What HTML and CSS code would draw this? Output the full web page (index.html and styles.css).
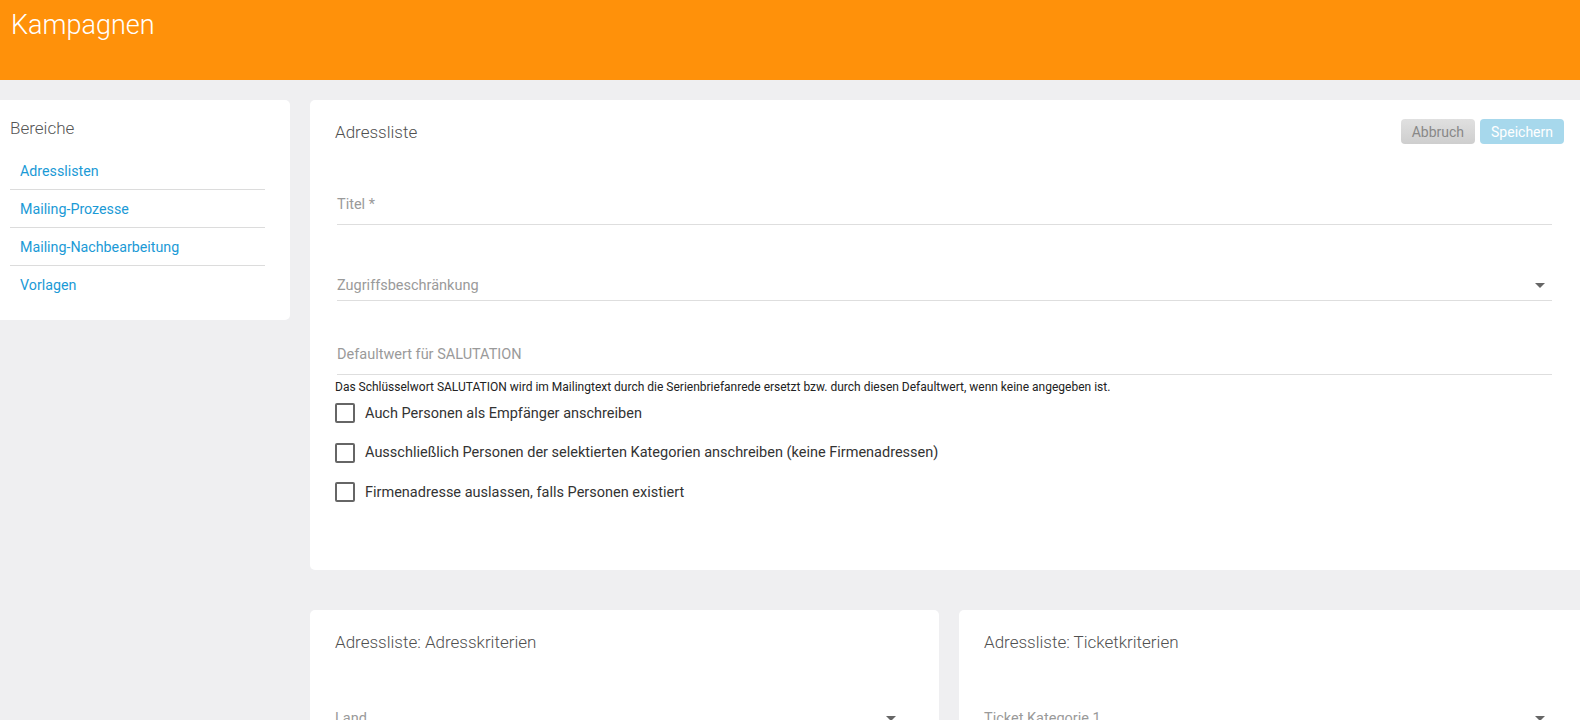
FILE: index.html
```html
<!DOCTYPE html>
<html>
<head>
    <meta charset="utf-8">
    <title>Kampagnen</title>
    <link rel="stylesheet" href="styles.css">
</head>
<body>
    <header class="topbar">
        <h1>Kampagnen</h1>
    </header>

    <div class="page">
        <aside class="sidebar">
            <h2>Bereiche</h2>
            <ul class="nav-list">
                <li><a href="#">Adresslisten</a></li>
                <li><a href="#">Mailing-Prozesse</a></li>
                <li><a href="#">Mailing-Nachbearbeitung</a></li>
                <li><a href="#">Vorlagen</a></li>
            </ul>
        </aside>

        <main class="content">
            <section class="card main-card">
                <div class="card-head">
                    <h3>Adressliste</h3>
                    <div class="actions">
                        <button class="btn btn-cancel">Abbruch</button>
                        <button class="btn btn-save">Speichern</button>
                    </div>
                </div>

                <div class="form">
                    <div class="field field-title">
                        <span class="label">Titel *</span>
                    </div>
                    <div class="field field-select field-access">
                        <span class="label">Zugriffsbeschränkung</span>
                        <span class="arrow"></span>
                    </div>
                    <div class="field field-default">
                        <span class="label">Defaultwert für SALUTATION</span>
                    </div>
                    <p class="hint">Das Schlüsselwort SALUTATION wird im Mailingtext durch die Serienbriefanrede ersetzt bzw. durch diesen Defaultwert, wenn keine angegeben ist.</p>
                </div>

                <div class="checks">
                    <label class="check"><span class="box"></span>Auch Personen als Empfänger anschreiben</label>
                    <label class="check"><span class="box"></span>Ausschließlich Personen der selektierten Kategorien anschreiben (keine Firmenadressen)</label>
                    <label class="check"><span class="box"></span>Firmenadresse auslassen, falls Personen existiert</label>
                </div>
            </section>

            <div class="criteria">
                <section class="card sub-card">
                    <h3>Adressliste: Adresskriterien</h3>
                    <div class="field field-select sub-field">
                        <span class="label">Land</span>
                        <span class="arrow"></span>
                    </div>
                </section>
                <section class="card sub-card">
                    <h3>Adressliste: Ticketkriterien</h3>
                    <div class="field field-select sub-field">
                        <span class="label">Ticket Kategorie 1</span>
                        <span class="arrow"></span>
                    </div>
                </section>
            </div>
        </main>
    </div>
</body>
</html>
```

FILE: styles.css
```css
body {
    margin: 0;
    padding: 0;
    background-color: #efeff1;
    font-family: Roboto, "Liberation Sans", Arial, sans-serif;
    color: #333;
    overflow: hidden;
}

.topbar {
    background-color: #ff910a;
    height: 80px;
    box-sizing: border-box;
    padding: 11px 11px;
}

.topbar h1 {
    margin: 0;
    font-size: 27px;
    line-height: 28px;
    font-weight: 300;
    color: #fff;
}

.page {
    display: flex;
    gap: 20px;
    padding-top: 20px;
    width: 1588px;
}

/* linke Navigation */
.sidebar {
    flex: 0 0 290px;
    align-self: flex-start;
    background-color: #fff;
    border-radius: 0 5px 5px 0;
    padding: 18px 0 17px 10px;
    box-sizing: border-box;
}

.sidebar h2 {
    margin: 0 0 14px 0;
    font-size: 17px;
    line-height: 20px;
    font-weight: 300;
    color: #555;
}

.nav-list {
    list-style-type: none;
    margin: 0;
    padding: 0;
    width: 255px;
}

.nav-list li {
    padding: 9px 0 8px 10px;
    border-bottom: 1px solid #dcdcdc;
    line-height: 20px;
}

.nav-list li:last-child {
    border-bottom: none;
}

.nav-list a {
    text-decoration: none;
    color: #1b9ad6;
    font-size: 14.25px;
}

.content {
    flex: 1;
    min-width: 0;
}

.card {
    background-color: #fff;
    border-radius: 5px;
}

.card h3 {
    margin: 0;
    font-size: 17px;
    line-height: 20px;
    font-weight: 300;
    color: #505050;
}

.main-card {
    padding: 19px 0 68px 0;
}

.card-head {
    display: flex;
    justify-content: space-between;
    align-items: center;
    height: 25px;
    padding: 0 24px 0 25px;
}

.actions {
    display: flex;
    gap: 5px;
}

.btn {
    height: 25px;
    border: none;
    border-radius: 4px;
    font-family: Roboto, "Liberation Sans", Arial, sans-serif;
    font-size: 14px;
    padding: 0 11px;
}

.btn-cancel {
    background: linear-gradient(#e0e0e0, #cecece);
    color: #888;
}

.btn-save {
    background-color: #a7d8ec;
    color: #fff;
}

.form {
    padding: 0 36px 0 27px;
}

.field {
    position: relative;
    border-bottom: 1px solid #dedede;
    padding-bottom: 9px;
}

.label {
    display: block;
    font-size: 14.5px;
    line-height: 20px;
    color: #9a9a9a;
}

.field-title {
    margin-top: 51px;
}

.field-access {
    margin-top: 51px;
    padding-bottom: 4px;
}

.field-default {
    margin-top: 44px;
}

.arrow {
    position: absolute;
    right: 7px;
    top: 7px;
    width: 0;
    height: 0;
    border-left: 5px solid transparent;
    border-right: 5px solid transparent;
    border-top: 5px solid #666;
}

.hint {
    margin: 5px 0 0 -2px;
    font-size: 12px;
    line-height: 14px;
    color: #222;
}

.checks {
    padding: 9px 0 0 25px;
    display: flex;
    flex-direction: column;
    gap: 19.5px;
}

.check {
    display: flex;
    align-items: center;
    height: 20px;
    font-size: 14.5px;
    color: #333;
}

.box {
    width: 20px;
    height: 20px;
    box-sizing: border-box;
    border: 2px solid #666;
    border-radius: 2px;
    margin-right: 10px;
}

.criteria {
    display: grid;
    grid-template-columns: 1fr 1fr;
    gap: 20px;
    margin-top: 40px;
}

.sub-card {
    padding: 22px 36px 40px 25px;
}

.sub-field {
    margin-top: 57px;
}
```
